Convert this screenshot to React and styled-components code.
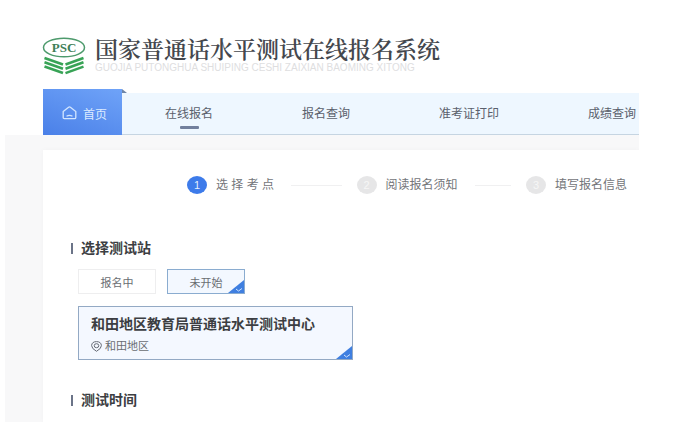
import { useState } from "react";
import styled, { createGlobalStyle } from "styled-components";

const NavLinks = ["在线报名", "报名查询", "准考证打印", "成绩查询"];

const Steps = ["选 择 考 点", "阅读报名须知", "填写报名信息"];

const Statuses = ["报名中", "未开始"];

function Logo() {
  return (
    <LogoImage viewBox="0 0 44 38" role="img" aria-label="PSC">
      <ellipse cx="22" cy="10.5" rx="20.5" ry="9.3" fill="#fff" stroke="#4d9a6c" strokeWidth="1.5" />
      <text
        x="22"
        y="15"
        textAnchor="middle"
        fontFamily="Liberation Serif, serif"
        fontWeight="700"
        fontSize="13"
        fill="#3f8059"
      >
        PSC
      </text>
      <g fill="none" stroke="#38a356" strokeWidth="2.6">
        <path d="M2.5 21 L21 27.5" />
        <path d="M2.5 25.300 L21 31.800" />
        <path d="M2.5 29.600 L21 36.100" />
        <path d="M41.500 21 L23.500 27.5" />
        <path d="M41.500 25.300 L23.500 31.800" />
        <path d="M41.500 29.600 L23.500 36.100" />
      </g>
    </LogoImage>
  );
}

function HomeIcon() {
  return (
    <svg width="15" height="14" viewBox="0 0 15 14" fill="none" stroke="#d3e6ff" strokeWidth="1.3" aria-hidden="true">
      <path d="M1.200 5.600 L6.300 1.400 Q7.500 .5 8.700 1.400 L13.800 5.600 V11.500 Q13.800 12.700 12.600 12.700 H2.400 Q1.200 12.700 1.200 11.500 Z" />
      <path d="M4.500 10.200 Q7.500 8.600 10.500 10.200" />
    </svg>
  );
}

function PinIcon() {
  return (
    <svg width="11" height="11" viewBox="0 0 11 11" fill="none" stroke="#666b75" aria-hidden="true">
      <path d="M5.500 10.300 Q.6 7.600 .6 4.600 Q.8 .7 5.500 .6 Q10.200 .7 10.400 4.600 Q10.400 7.600 5.500 10.300 Z" />
      <ellipse cx="5.500" cy="4.700" rx="2.300" ry="2" />
    </svg>
  );
}

function CheckCorner() {
  return (
    <Corner viewBox="0 0 16 13" aria-hidden="true">
      <path d="M16 0 V13 H0 Z" fill="#3f7fe0" />
      <path d="M8 9 L10.500 11 L14 8.500" fill="none" stroke="#cfe3ff" />
    </Corner>
  );
}

export default function App() {
  const [status, setStatus] = useState("未开始");

  return (
    <>
      <GlobalStyle />
      <Page>
        <Header>
          <Logo />
          <div>
            <SiteTitle>国家普通话水平测试在线报名系统</SiteTitle>
            <SiteSubtitle>GUOJIA PUTONGHUA SHUIPING CESHI ZAIXIAN BAOMING XITONG</SiteSubtitle>
          </div>
        </Header>
        <Nav>
          <HomeLink href="#home">
            <HomeIcon />
            首页
          </HomeLink>
          <NavList>
            {NavLinks.map((label, i) => (
              <NavLink key={label} href="#nav" $active={i === 0}>
                {label}
              </NavLink>
            ))}
          </NavList>
        </Nav>
        <Content>
          <Card>
            <StepList>
              {Steps.map((label, i) => (
                <Step key={label}>
                  <StepNumber $active={i === 0}>{i + 1}</StepNumber>
                  {label}
                </Step>
              ))}
            </StepList>
            <Section>
              <SectionTitle>选择测试站</SectionTitle>
              <StatusRow>
                {Statuses.map((label) => (
                  <StatusButton
                    key={label}
                    type="button"
                    aria-pressed={status === label}
                    $selected={status === label}
                    onClick={() => setStatus(label)}
                  >
                    {label}
                    {status === label && <CheckCorner />}
                  </StatusButton>
                ))}
              </StatusRow>
              <Station type="button" aria-pressed="true">
                <StationName>和田地区教育局普通话水平测试中心</StationName>
                <StationArea>
                  <PinIcon />
                  和田地区
                </StationArea>
                <CheckCorner />
              </Station>
            </Section>
            <Section>
              <SectionTitle>测试时间</SectionTitle>
            </Section>
          </Card>
        </Content>
      </Page>
    </>
  );
}

const GlobalStyle = createGlobalStyle`
  * {
    box-sizing: border-box;
  }

  body {
    margin: 0;
    background: #fff;
    font-family: "Liberation Sans", "Noto Sans CJK SC", sans-serif;
  }
`;

const Page = styled.div`
  min-height: 100vh;
  padding: 37px 44px 7px 5px;
  display: flex;
  flex-direction: column;
`;

const Header = styled.header`
  display: flex;
  gap: 9px;
  padding-left: 37px;
  height: 52px;
`;

const LogoImage = styled.svg`
  width: 44px;
  height: 38px;
  flex: none;
`;

const SiteTitle = styled.h1`
  margin: 0;
  padding-top: 2px;
  font-family: "Liberation Serif", "Noto Serif CJK SC", "Noto Sans CJK SC", serif;
  font-size: 23px;
  font-weight: 600;
  line-height: 24px;
  color: #44474d;
  white-space: nowrap;
`;

const SiteSubtitle = styled.p`
  margin: 0;
  font-size: 10px;
  line-height: 10px;
  color: #dededf;
  white-space: nowrap;
`;

const Nav = styled.nav`
  display: flex;
  align-items: flex-end;
  padding-left: 38px;
`;

const HomeLink = styled.a`
  position: relative;
  display: flex;
  align-items: center;
  justify-content: center;
  gap: 6px;
  flex: none;
  width: 79px;
  height: 46px;
  padding: 2px 0 0 4px;
  background: linear-gradient(20deg, #4a80e8, #6fa3f8);
  color: #dcebff;
  font-size: 12px;
  text-decoration: none;

  /* folded edge over the menu strip */
  &::after {
    content: "";
    position: absolute;
    top: 0;
    left: 100%;
    border-bottom: 4px solid #6e86a8;
    border-right: 5px solid transparent;
  }
`;

const NavList = styled.div`
  flex: 1;
  min-width: 0;
  height: 42px;
  padding: 0 3px 0 43px;
  display: flex;
  align-items: center;
  justify-content: space-between;
  background: #eef7ff;
  border-bottom: 1px solid #c6d5e2;
`;

const NavLink = styled.a`
  position: relative;
  color: #5a606c;
  font-size: 12px;
  line-height: 18px;
  white-space: nowrap;
  text-decoration: none;

  &::after {
    content: "";
    display: ${(props) => (props.$active ? "block" : "none")};
    position: absolute;
    bottom: -6px;
    left: 15px;
    right: 14px;
    height: 3px;
    border-radius: 1px;
    background: #72809d;
  }
`;

const Content = styled.main`
  flex: 1;
  display: flex;
  padding: 15px 0 0 38px;
  background: #f8f8f9;
`;

const Card = styled.div`
  flex: 1;
  min-width: 0;
  padding: 26px 12px 12px 28px;
  background: #fff;
  box-shadow: 0 0 5px rgba(0, 0, 0, 0.03);
  clip-path: inset(-5px 0 0 -5px);
`;

const StepList = styled.ol`
  display: flex;
  margin: 0;
  padding: 0 0 0 116px;
  list-style: none;
`;

const Step = styled.li`
  display: flex;
  align-items: center;
  flex: 1;
  gap: 9px;
  color: #737579;
  font-size: 12px;
  line-height: 18px;
  white-space: nowrap;

  &:not(:last-child)::after {
    content: "";
    flex: 1;
    height: 1px;
    margin: 0 15px 0 8px;
    background: #f0f0f1;
  }

  &:last-child {
    flex: none;
  }
`;

const StepNumber = styled.span`
  width: 20px;
  height: 18px;
  flex: none;
  border-radius: 50%;
  background: ${(props) => (props.$active ? "#3d7bea" : "#e6e6e7")};
  color: ${(props) => (props.$active ? "#e4efff" : "#f6f6f6")};
  font-size: 11px;
  text-align: center;
`;

const Section = styled.section`
  margin-top: 44px;

  & + & {
    margin-top: 30px;
  }
`;

const SectionTitle = styled.h2`
  display: flex;
  align-items: center;
  gap: 8px;
  margin: 0;
  color: #3c3e42;
  font-size: 14px;
  font-weight: 700;
  line-height: 20px;

  &::before {
    content: "";
    width: 2px;
    height: 11px;
    background: #6b7488;
  }
`;

const StatusRow = styled.div`
  display: flex;
  gap: 11px;
  margin: 11px 0 12px 7px;
`;

const StatusButton = styled.button`
  position: relative;
  width: 78px;
  height: 25px;
  padding: 0;
  border: 1px solid ${(props) => (props.$selected ? "#8aacd0" : "#eeeeef")};
  background: ${(props) => (props.$selected ? "#f3f8ff" : "#fff")};
  color: #6a6d72;
  font-family: inherit;
  font-size: 11px;
`;

const Corner = styled.svg`
  position: absolute;
  right: 0;
  bottom: 0;
  width: 16px;
  height: 13px;
`;

const Station = styled.button`
  position: relative;
  display: block;
  width: 275px;
  max-width: 100%;
  margin-left: 7px;
  padding: 7px 12px 5px;
  border: 1px solid #93a9c4;
  background: #f4f8ff;
  font-family: inherit;
  text-align: left;
`;

const StationName = styled.span`
  display: block;
  color: #3c3e42;
  font-size: 14px;
  font-weight: 700;
  line-height: 20px;
`;

const StationArea = styled.span`
  display: flex;
  align-items: center;
  gap: 3px;
  margin-top: 4px;
  color: #6a6d72;
  font-size: 11px;
  line-height: 16px;
`;
